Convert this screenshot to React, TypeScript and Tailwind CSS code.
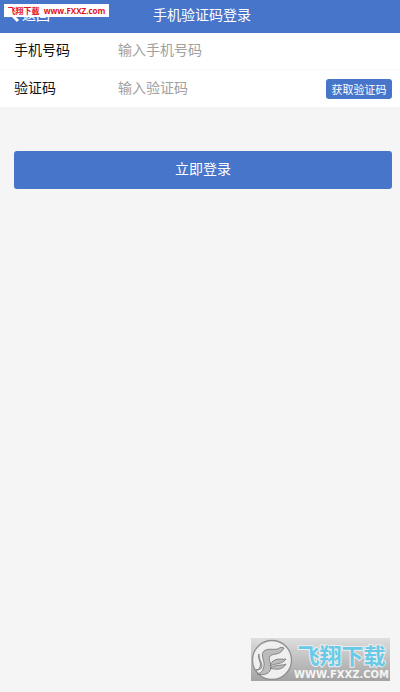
import React, { useState } from "react";

const Header: React.FC = () => {
    return (
        <header className="relative flex h-[33px] items-start justify-center bg-[#4775ca] text-white">
            <a href="/" className="absolute left-1 top-1 flex items-center text-sm leading-5">
                <svg className="h-5 w-[18px]" viewBox="0 0 18 20" fill="none" stroke="currentColor" strokeWidth="3">
                    <path d="M14 1L6 9L14 17" />
                </svg>
                返回
            </a>
            <h1 className="pl-1 pt-1 text-sm leading-5">手机验证码登录</h1>
            <div className="absolute left-1 top-1 flex h-[13px] w-[105px] items-center justify-center gap-1 whitespace-nowrap bg-white text-[8px] font-bold leading-none text-[#e0141c]">
                <span>飞翔下載</span>
                <span className="font-['Open_Sans',sans-serif]">www.FXXZ.com</span>
            </div>
        </header>
    );
};

const Logo: React.FC = () => {
    return (
        <svg className="h-[42px] w-[42px] shrink-0" viewBox="0 0 42 42" fill="none">
            <circle cx="21" cy="21" r="19.5" fill="#efefef" stroke="#909090" strokeWidth="1.3" />
            <g fill="#bcbcbc" stroke="#7c7c7c" strokeWidth="0.9" strokeLinejoin="round">
                <path d="M33 9C31 8 29 8 27 10C22 11 17 9 13 12C9 16 14 22 13 27C12 32 10 34 6 35C14 37 20 34 20 28C20 24 17 20 19 17C22 14 29 17 33 9Z" />
                <path d="M35 20C32 21 28 19 24 21C21 22 20 24 19 27C24 24 31 26 35 20Z" />
                <path d="M35 25C31 27 26 25 19 29C25 31 32 31 35 25Z" />
                <path d="M8 15C6 19 11 24 9 28C8 30 7 31 5 31C11 31 12 28 10 23C8 19 8 17 8 15Z" />
            </g>
        </svg>
    );
};

const Watermark: React.FC = () => {
    return (
        <div className="fixed bottom-[11px] right-[10px] flex h-[43px] w-[139px] items-center bg-linear-to-b from-[#dedede] to-[#a3a3a3]">
            <Logo />
            <div className="flex flex-1 flex-col items-center whitespace-nowrap">
                <span className="text-[22px] font-bold leading-[30px] text-[#67cae8] [paint-order:stroke] [-webkit-text-stroke:2px_#ededed]">飞翔下载</span>
                <span className="font-['DejaVu_Sans',sans-serif] text-[10px] font-bold leading-[12px] text-[#f5f5f5]">WWW.FXXZ.COM</span>
            </div>
        </div>
    );
};

const App: React.FC = () => {

    const [phone, setPhone] = useState<string>("")

    const [code, setCode] = useState<string>("")

    return (
        <div className="min-h-screen bg-[#f5f5f5] font-['Noto_Sans_CJK_SC',sans-serif]">
            <Header />
            <form onSubmit={(e) => e.preventDefault()}>
                <div className="bg-white text-sm text-[#111]">
                    <div className="flex h-[37px] items-center border-b border-[#f8f8f8] pb-1 pl-[14px] pr-2">
                        <label htmlFor="phone" className="w-[104px] shrink-0">手机号码</label>
                        <input
                            id="phone"
                            type="tel"
                            value={phone}
                            onChange={(e) => setPhone(e.target.value)}
                            placeholder="输入手机号码"
                            className="min-w-0 flex-1 outline-none placeholder:text-[#a0a0a0]"
                        />
                    </div>
                    <div className="flex h-[37px] items-center pb-1 pl-[14px] pr-2">
                        <label htmlFor="code" className="w-[104px] shrink-0">验证码</label>
                        <input
                            id="code"
                            type="text"
                            value={code}
                            onChange={(e) => setCode(e.target.value)}
                            placeholder="输入验证码"
                            className="min-w-0 flex-1 outline-none placeholder:text-[#a0a0a0]"
                        />
                        <button type="button" className="mt-1 h-5 w-[66px] shrink-0 rounded-[3px] bg-[#4775ca] text-[11px] leading-5 text-white">
                            获取验证码
                        </button>
                    </div>
                </div>
                <div className="pl-[14px] pr-2 pt-11">
                    <button type="submit" className="h-[38px] w-full rounded-[3px] bg-[#4775ca] pb-1 text-sm text-white">
                        立即登录
                    </button>
                </div>
            </form>
            <Watermark />
        </div>
    );
};

export default App;
